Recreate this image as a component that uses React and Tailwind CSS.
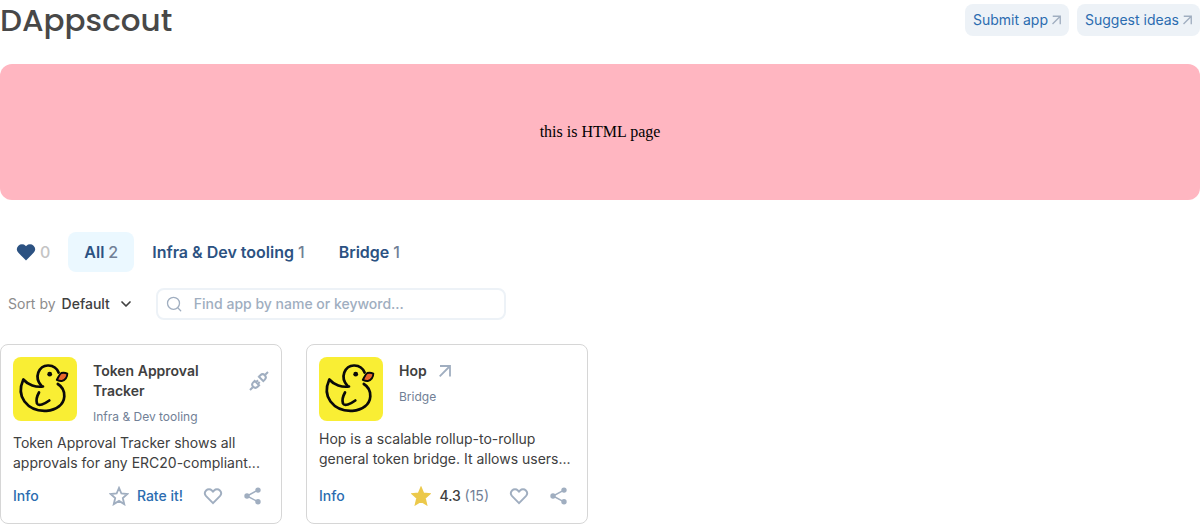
import { useState } from 'react';

const apps = [
  {
    id: 'token-approval-tracker',
    title: 'Token Approval Tracker',
    category: 'Infra & Dev tooling',
    description: 'Token Approval Tracker shows all approvals for any ERC20-compliant...',
    internal: true,
  },
  {
    id: 'hop',
    title: 'Hop',
    category: 'Bridge',
    description: 'Hop is a scalable rollup-to-rollup general token bridge. It allows users...',
    rating: 4.3,
    votes: 15,
  },
];

const tabs = [
  { id: 'all', label: 'All', count: 2 },
  { id: 'infra', label: 'Infra & Dev tooling', count: 1 },
  { id: 'bridge', label: 'Bridge', count: 1 },
];

function ArrowIcon({ className, viewBox = '0 0 20 20' }) {
  return (
    <svg viewBox={viewBox} className={className} fill="none" stroke="currentColor" strokeWidth="1.8" aria-hidden="true">
      <path d="M5 5h10v10.600M15 5 4.700 15.300" />
    </svg>
  );
}

function PlugIcon({ className }) {
  return (
    <svg viewBox="0 0 20 20" className={className} fill="none" stroke="currentColor" strokeWidth="2" aria-hidden="true">
      <path d="M1 19 3.800 16.200M16.200 3.800 19 1" />
      <path d="M5 9.200 10.800 15M5.700 9.900 4.200 11.400a3.100 3.100 0 0 0 4.400 4.400L10.100 14.300M7.300 11 9 9.300M9 12.700 10.700 11" />
      <path d="M9.200 5 15 10.800M9.900 5.700 11.400 4.200a3.100 3.100 0 0 1 4.400 4.400L14.300 10.100" />
    </svg>
  );
}

function HeartIcon({ className, filled }) {
  return (
    <svg viewBox="0 0 20 20" className={className} fill={filled ? 'currentColor' : 'none'} stroke="currentColor" strokeWidth="1.900" aria-hidden="true">
      <path d="M10 17.100 3.100 10.200a4.200 4.200 0 0 1 0-5.700 4.100 4.100 0 0 1 5.800 0L10 5.600l1.100-1.100a4.100 4.100 0 0 1 5.800 0 4.200 4.200 0 0 1 0 5.700Z" />
    </svg>
  );
}

function StarIcon({ className, filled }) {
  return (
    <svg viewBox="0.800 0.600 18.400 18.400" className={className} fill={filled ? 'currentColor' : 'none'} stroke="currentColor" strokeWidth="1.700" aria-hidden="true">
      <path d="m10 2.400 2.200 5.100 5.500.5-4.200 3.700 1.300 5.600L10 14.300l-4.800 3 1.300-5.600L2.300 8l5.500-.5Z" />
    </svg>
  );
}

function ShareIcon({ className }) {
  return (
    <svg viewBox="0 0 20 20" className={className} fill="currentColor" aria-hidden="true">
      <path d="M15 4.100 4 10l11 5.800" fill="none" stroke="currentColor" strokeWidth="1.500" />
      <circle cx="15" cy="4.100" r="2.700" />
      <circle cx="4" cy="10" r="2.700" />
      <circle cx="15" cy="15.800" r="2.700" />
    </svg>
  );
}

function DuckLogo() {
  return (
    <svg viewBox="0 0 64 64" className="size-16 shrink-0 rounded-lg bg-[#f9ee34]" fill="none" stroke="#0a0a0a" strokeWidth="2.700" strokeLinecap="round" strokeLinejoin="round" role="img" aria-label="Duck logo">
      <path d="M28.500 29C24.500 24.500 23.800 19.500 25.300 15.500C27.300 10.500 31.500 8.300 35.500 8.500C40.500 8.700 44.200 12 45.600 15.600" />
      <path d="M30 29.500C23 30.500 15 28 10.300 22.500C7 30 6.700 38 11.500 44.500C16.500 51 25 54.300 33.500 53.800C43.500 53.200 50.800 47.500 51.300 39.500C51.600 34 49 29.500 44.800 27" />
      <path d="M26 35.500C24.300 38.500 23 43.500 24 46.500C25.500 49.500 31.500 47 36.300 43.500" />
      <path d="M43.800 22.800C45.500 20.500 46 17.500 48.300 16C50.500 15.500 53 16 54.300 16.600C54.500 20 52 23.500 48.800 24C47 24.300 45.300 23.500 43.800 22.800Z" fill="#e8652b" strokeWidth="1.900" />
      <circle cx="36.700" cy="17.200" r="2.400" fill="#0a0a0a" stroke="none" />
    </svg>
  );
}

function HeaderLink({ children }) {
  return (
    <a href="#" className="flex h-8 items-center gap-1 rounded-lg bg-[#edf2f7] px-2 text-[#2b6cb0]">
      {children}
      <ArrowIcon viewBox="4 3 12 14" className="h-3 w-[9px] text-[#a0aec0]" />
    </a>
  );
}

function AppCard({ app }) {
  const [favorite, setFavorite] = useState(false);
  return (
    <article className="flex flex-col rounded-lg border border-[#d6d6d6] p-3">
      <div className="flex gap-4">
        <DuckLogo />
        <div className="flex min-w-0 grow flex-col gap-2 pt-1">
          <div className={app.internal ? 'flex items-center justify-between gap-3' : 'flex items-center gap-2'}>
            <h2 className="font-semibold">
              <a href="#">{app.title}</a>
            </h2>
            {app.internal ? (
              <PlugIcon className="size-5 shrink-0 text-[#a0aec0]" />
            ) : (
              <ArrowIcon className="size-5 shrink-0 text-[#a0aec0]" />
            )}
          </div>
          <p className="text-xs text-[#718096]">{app.category}</p>
        </div>
      </div>
      <p className="mt-2">{app.description}</p>
      <div className="mt-auto flex items-center justify-between pt-2">
        <a href="#" className="font-medium text-[#2b6cb0]">Info</a>
        <div className="flex h-[30px] items-center gap-2">
          {app.rating ? (
            <button type="button" className="mr-1.5 flex items-center gap-2">
              <StarIcon filled className="size-5 text-[#ecc94b]" />
              <span className="font-medium">
                {app.rating} <span className="font-normal text-[#718096]">({app.votes})</span>
              </span>
            </button>
          ) : (
            <button type="button" className="mr-1.5 flex items-center gap-2 font-medium text-[#2b6cb0]">
              <StarIcon className="size-5 text-[#a0aec0]" />
              Rate it!
            </button>
          )}
          <button type="button" aria-label="Add to favorites" aria-pressed={favorite} onClick={() => setFavorite(!favorite)} className="flex w-8 justify-center text-[#a0aec0]">
            <HeartIcon filled={favorite} className="size-5" />
          </button>
          <button type="button" aria-label="Share" className="flex w-8 justify-center text-[#a0aec0]">
            <ShareIcon className="size-5" />
          </button>
        </div>
      </div>
    </article>
  );
}

export default function App() {
  const [active, setActive] = useState('all');
  return (
    <main className="bg-white font-['Inter',sans-serif] text-sm text-[#404040]">
      <header className="mb-6 flex items-center justify-between">
        <h1 className="font-['Poppins','Inter',sans-serif] text-[31px] leading-10 font-medium text-[#484848]">DAppscout</h1>
        <nav className="flex gap-2">
          <HeaderLink>Submit app</HeaderLink>
          <HeaderLink>Suggest ideas</HeaderLink>
        </nav>
      </header>

      <section className="flex h-[136px] items-center justify-center rounded-xl bg-[#ffb6c1] font-['Liberation_Serif',serif] text-base text-black">
        this is HTML page
      </section>

      <div role="tablist" className="mt-8 flex gap-0.5 text-base font-semibold text-[#2c5282]">
        <button type="button" role="tab" aria-label="Favorites" aria-selected={active === 'favorites'} onClick={() => setActive('favorites')} className="flex h-10 items-center gap-1 rounded-lg px-4 aria-selected:bg-[#ebf8ff]">
          <HeartIcon filled className="size-5" />
          <span className="font-medium text-[#c4c4c4]">0</span>
        </button>
        {tabs.map((tab) => (
          <button key={tab.id} type="button" role="tab" aria-selected={active === tab.id} onClick={() => setActive(tab.id)} className="flex h-10 items-center gap-1 rounded-lg px-4 aria-selected:bg-[#ebf8ff]">
            {tab.label}
            <span className="font-medium text-[#718096]">{tab.count}</span>
          </button>
        ))}
      </div>

      <div className="mt-4 flex items-center gap-6">
        <div className="flex items-center gap-1.5 pl-2">
          <label htmlFor="sort" className="text-[#8c8c8c]">Sort by</label>
          <div className="grid items-center">
            <select id="sort" className="col-start-1 row-start-1 field-sizing-content appearance-none pr-[22px] font-medium">
              <option>Default</option>
            </select>
            <svg viewBox="0 0 12 12" className="pointer-events-none col-start-1 row-start-1 size-3 justify-self-end" fill="none" stroke="currentColor" strokeWidth="1.700" strokeLinecap="round" strokeLinejoin="round" aria-hidden="true">
              <path d="m2 4 4 4 4-4" />
            </svg>
          </div>
        </div>
        <div className="flex h-8 w-[350px] items-center gap-3 rounded-lg border-2 border-[#edf2f7] px-2">
          <svg viewBox="0 0 16 16" className="size-4 shrink-0 text-[#a0aec0]" fill="none" stroke="currentColor" strokeWidth="1.300" strokeLinecap="round" aria-hidden="true">
            <circle cx="7.500" cy="7.300" r="6" />
            <path d="m12 12 2.700 2.700" />
          </svg>
          <input type="search" aria-label="Search apps" placeholder="Find app by name or keyword..." className="min-w-0 grow bg-transparent font-medium outline-none placeholder:text-[#a0aec0]" />
        </div>
      </div>

      <div className="mt-6 grid grid-cols-[repeat(auto-fill,minmax(270px,1fr))] gap-6">
        {apps.map((app) => (
          <AppCard key={app.id} app={app} />
        ))}
      </div>
    </main>
  );
}
